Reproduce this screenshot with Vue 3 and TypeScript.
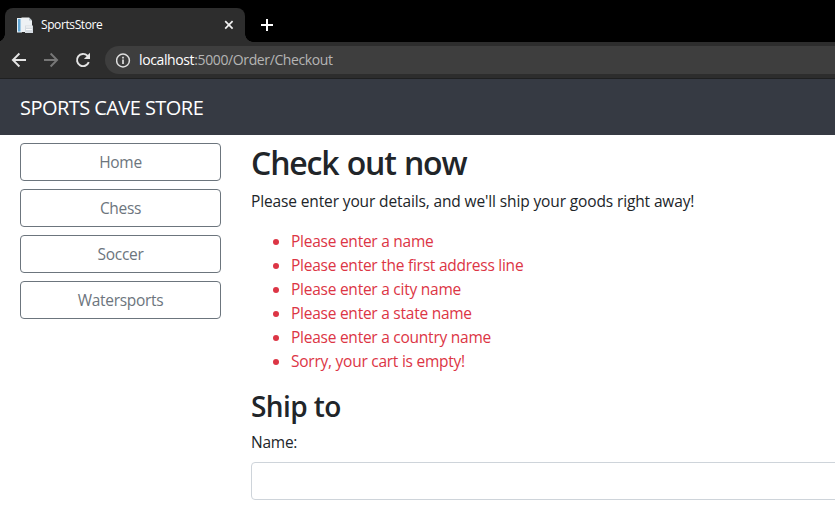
<script setup lang="ts">
const categories: string[] = ['Home', 'Chess', 'Soccer', 'Watersports']
const errors: string[] = [
  'Please enter a name',
  'Please enter the first address line',
  'Please enter a city name',
  'Please enter a state name',
  'Please enter a country name',
  'Sorry, your cart is empty!',
]
</script>

<template>
  <div class="window">
    <div class="tabstrip">
      <div class="tab">
        <svg class="favicon" width="17" height="17" viewBox="0 0 17 17">
          <path d="M0 1h5v14.5H0z" fill="#e6f0f7" />
          <path d="M1 2h2.5v12.5H1z" fill="#62a7d4" />
          <path d="M4.5 .5h7.5l3 3V15H4.5z" fill="#edf1f4" />
          <path d="M12 .5v3h3z" fill="#bac5cd" />
          <path d="M8 8.5h8V16H8z" fill="#d5dbe1" />
          <path d="M9 10h6M9 12.5h6" stroke="#fafafa" />
        </svg>
        <span class="tab-title">SportsStore</span>
        <svg class="close" width="10" height="10" viewBox="0 0 10 10">
          <path d="M1.2 1.2l7.4 7.4M8.6 1.2L1.2 8.6" stroke="#f1f1f1" stroke-width="1.7" />
        </svg>
      </div>
      <svg class="plus" width="12" height="12" viewBox="0 0 12 12">
        <path d="M6 0v12M0 6h12" stroke="#fff" stroke-width="2" />
      </svg>
    </div>

    <div class="toolbar">
      <svg class="nav-icon" width="16" height="16" viewBox="0 0 16 16">
        <path d="M15 8H2M8.4 1.5L1.9 8l6.5 6.5" fill="none" stroke="#e4e4e4" stroke-width="1.9" />
      </svg>
      <svg class="nav-icon" width="16" height="16" viewBox="0 0 16 16">
        <path d="M1 8h13M7.6 1.5L14.1 8l-6.5 6.5" fill="none" stroke="#777" stroke-width="1.9" />
      </svg>
      <svg class="nav-icon" width="16" height="16" viewBox="0 0 16 16">
        <path d="M13.8 10.2A6.1 6.1 0 1 1 12.4 3.7L13.5 5" fill="none" stroke="#e4e4e4" stroke-width="1.9" />
        <path d="M15 .8v6.1H8.9z" fill="#e4e4e4" />
      </svg>
      <div class="address">
        <svg width="15" height="15" viewBox="0 0 15 15">
          <circle cx="7" cy="7.5" r="6.4" fill="none" stroke="#dedede" stroke-width="1.5" />
          <path d="M7 6.6v4.4M7 3.7v1.7" stroke="#dedede" stroke-width="1.7" />
        </svg>
        <span class="url"><span class="host">localhost</span>:5000/Order/Checkout</span>
      </div>
    </div>

    <header class="navbar"><span class="brand">SPORTS CAVE STORE</span></header>

    <div class="page">
      <nav class="categories">
        <button v-for="category in categories" :key="category" type="button">{{ category }}</button>
      </nav>
      <main>
        <h2>Check out now</h2>
        <p>Please enter your details, and we'll ship your goods right away!</p>
        <ul>
          <li v-for="error in errors" :key="error">{{ error }}</li>
        </ul>
        <h3>Ship to</h3>
        <label for="name">Name:</label>
        <input id="name" type="text" />
      </main>
    </div>
  </div>
</template>

<style>
body {
  background: #fff;
  overflow: hidden;
}
</style>

<style scoped>
* {
  box-sizing: border-box;
}
.window {
  height: 517px;
  overflow: hidden;
  font: 15.5px/24px 'Segoe UI', 'Open Sans', 'Noto Sans', sans-serif;
  letter-spacing: -0.25px;
  color: #212529;
}
.tabstrip {
  height: 42px;
  padding: 8px 0 0 5px;
  display: flex;
  background: #000;
}
.tab {
  position: relative;
  width: 240px;
  height: 34px;
  padding: 0 11px 0 12px;
  display: flex;
  align-items: center;
  background: #2d2d2d;
  border-radius: 8px 8px 0 0;
}
.tab::before,
.tab::after {
  content: '';
  position: absolute;
  bottom: 0;
  width: 8px;
  height: 8px;
}
.tab::before {
  left: -8px;
  background: radial-gradient(circle at 0 0, transparent 7.5px, #2d2d2d 8px);
}
.tab::after {
  right: -8px;
  background: radial-gradient(circle at 100% 0, transparent 7.5px, #2d2d2d 8px);
}
.tab-title {
  flex: 1;
  margin-left: 7px;
  font-size: 12px;
  letter-spacing: -0.4px;
  color: #fff;
}
.plus {
  margin: 11px 0 0 16px;
}
.toolbar {
  height: 37px;
  padding-left: 11px;
  display: flex;
  align-items: center;
  background: #2d2d2d;
  border-bottom: 1px solid #1f2021;
}
.nav-icon {
  margin-right: 16px;
}
.address {
  flex: 1;
  height: 28px;
  margin-left: -2px;
  padding-left: 11px;
  display: flex;
  align-items: center;
  gap: 8px;
  background: #3e3e3e;
  border-radius: 14px 0 0 14px;
}
.url {
  font-size: 14px;
  letter-spacing: -0.38px;
  color: #b5b5b5;
}
.host {
  color: #fff;
}
.navbar {
  height: 56px;
  padding: 1px 20px 0;
  display: flex;
  align-items: center;
  background: #363a43;
  color: #fff;
  font-size: 20px;
  letter-spacing: -0.55px;
}
.page {
  padding: 8px 0 0 20px;
  display: flex;
  gap: 30px;
}
.categories {
  width: 201px;
  display: flex;
  flex-direction: column;
  gap: 8px;
}
button {
  height: 38px;
  padding: 0;
  background: #fff;
  border: 1px solid #6c757d;
  border-radius: 4px;
  font: inherit;
  letter-spacing: -0.3px;
  color: #6c757d;
}
main {
  flex: 1;
}
h2,
h3 {
  margin: 0;
  font-weight: 600;
}
h2 {
  height: 46px;
  padding-top: 1px;
  font-size: 32px;
  line-height: 38px;
  letter-spacing: -1.15px;
  word-spacing: 1px;
}
h3 {
  height: 41px;
  font-size: 28px;
  line-height: 34px;
  letter-spacing: -0.6px;
}
p {
  margin: 0 0 16px;
  letter-spacing: -0.13px;
}
ul {
  margin: 0 0 16px;
  padding-left: 40px;
  color: #dc3545;
}
label {
  display: block;
  margin-bottom: 8px;
}
input {
  display: block;
  width: calc(100% + 20px);
  height: 38px;
  border: 1px solid #ced4da;
  border-radius: 4px;
}
</style>
